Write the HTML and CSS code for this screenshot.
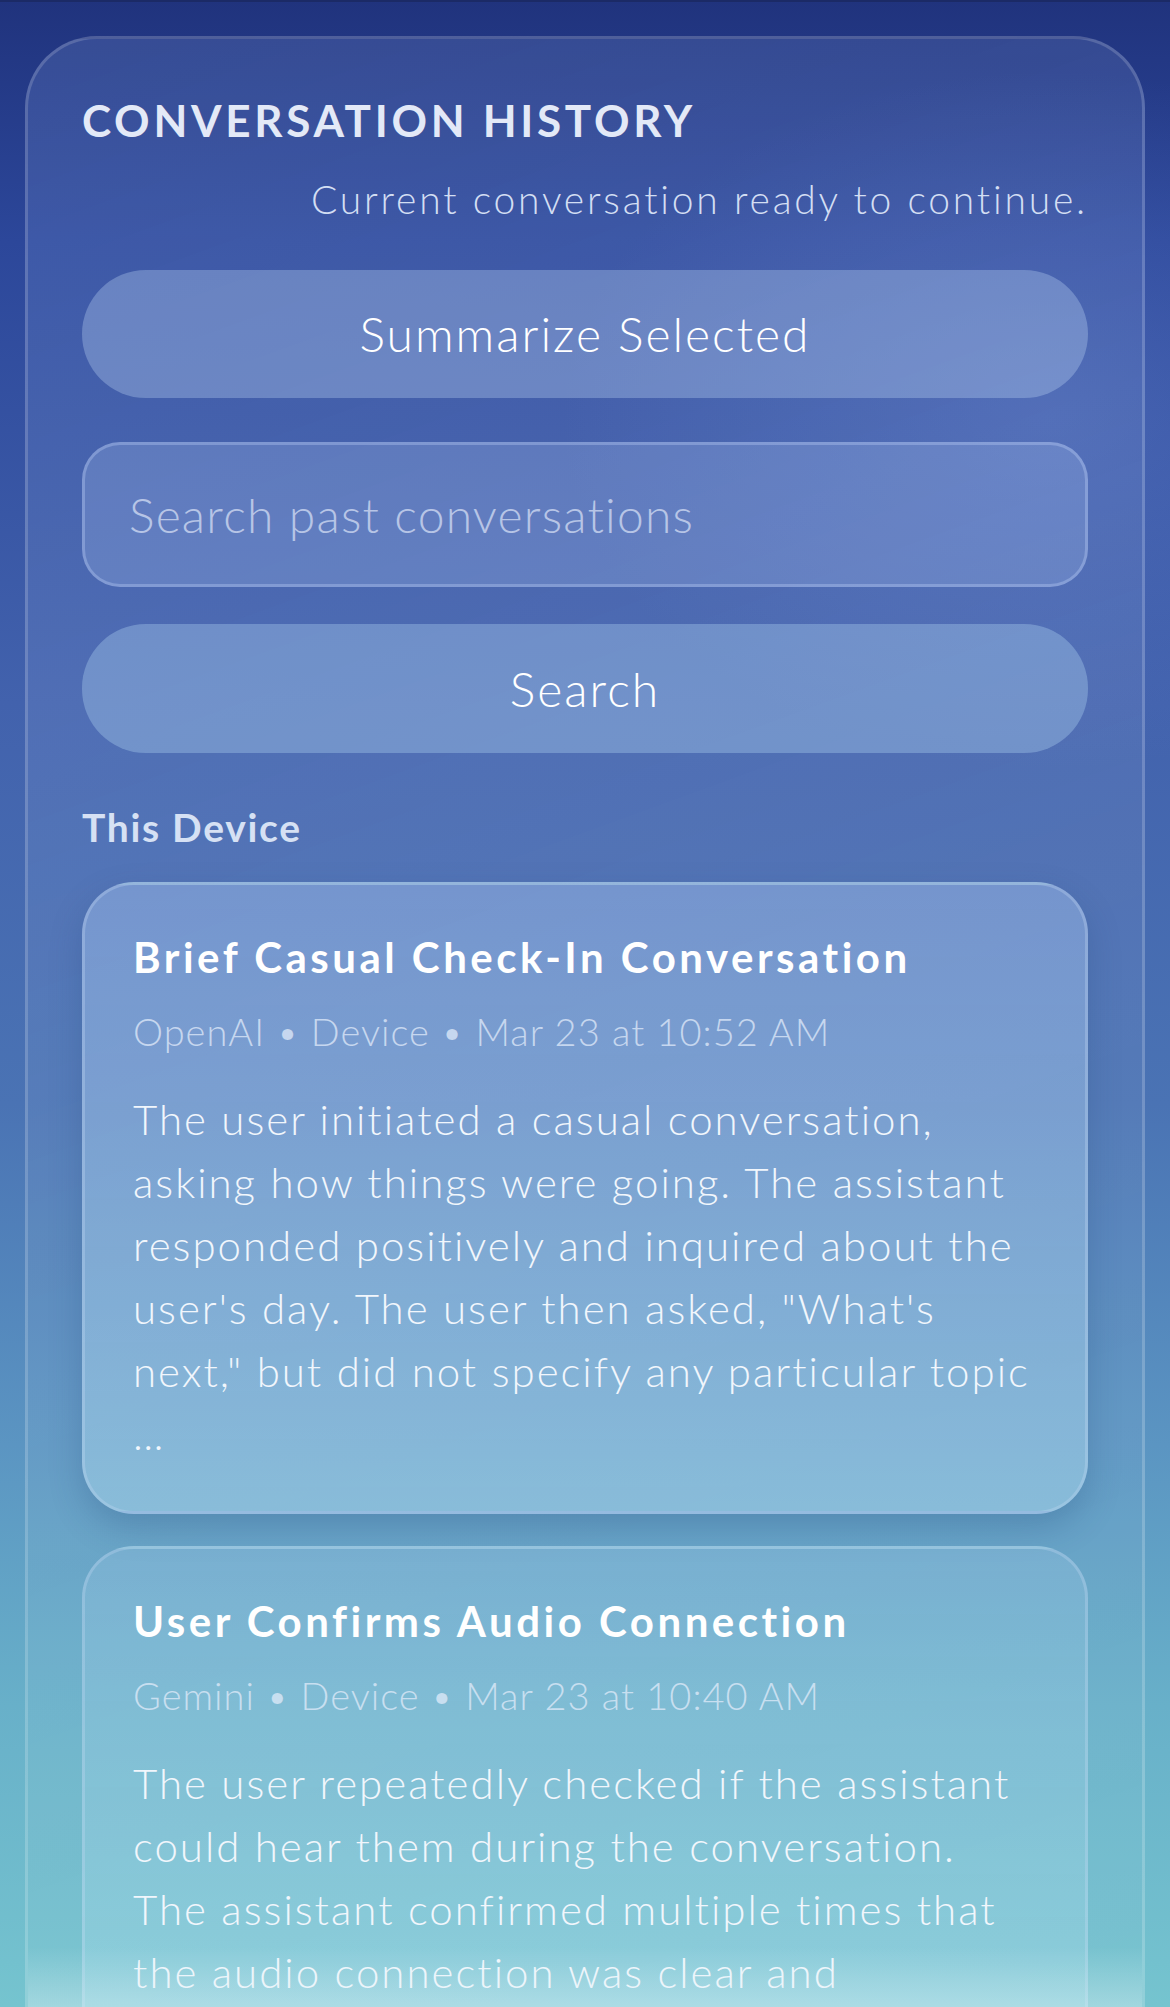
FILE: index.html
```html
<!DOCTYPE html>
<html lang="en">
<head>
  <meta charset="UTF-8" />
  <meta name="viewport" content="width=device-width, initial-scale=1.0"/>
  <title>Conversation History</title>
  <link rel="stylesheet" href="styles.css">
</head>
<body>
  <div class="page">
    <section class="panel">
      <h2 class="panel-title">CONVERSATION HISTORY</h2>
      <p class="status">Current conversation ready to continue.</p>

      <button type="button" class="pill-btn">Summarize Selected</button>
      <input type="text" class="search-input" placeholder="Search past conversations" />
      <button type="button" class="pill-btn search-btn">Search</button>

      <h3 class="group-label">This Device</h3>

      <div class="history-list">
        <div class="history-card">
          <h4 class="card-title">Brief Casual Check-In Conversation</h4>
          <div class="card-meta">OpenAI &bull; Device &bull; Mar 23 at 10:52 AM</div>
          <p class="card-summary">The user initiated a casual conversation, asking how things were going. The assistant responded positively and inquired about the user's day. The user then asked, "What's next," but did not specify any particular topic <span class="more">&hellip;</span></p>
        </div>

        <div class="history-card">
          <h4 class="card-title">User Confirms Audio Connection</h4>
          <div class="card-meta">Gemini &bull; Device &bull; Mar 23 at 10:40 AM</div>
          <p class="card-summary">The user repeatedly checked if the assistant could hear them during the conversation. The assistant confirmed multiple times that the audio connection was clear and uninterrupted throughout the call.</p>
        </div>
      </div>
    </section>
  </div>
</body>
</html>
```

FILE: styles.css
```css
* {
  margin: 0; padding: 0; box-sizing: border-box;
}
html, body {
  height: 100%;
}
body {
  font-family: Lato, "Open Sans", sans-serif;
  color: #fff;
  overflow: hidden;
  background:
    radial-gradient(ellipse 700px 500px at 1050px 420px, rgba(110,140,215,0.3), transparent 70%),
    linear-gradient(to bottom, #20337d 0%, #2c479a 12%, #4262ad 35%, #4a73b4 55%, #5b95c2 72%, #68b0c9 85%, #75c4cf 100%);
  border-top: 2px solid #1b2a66;
}
.page {
  height: 100%;
  padding: 34px 25px 0;
  display: flex;
}
.panel {
  position: relative;
  flex: 1;
  overflow: hidden;
  border: 3px solid rgba(255,255,255,0.17);
  border-bottom: none;
  border-radius: 72px 72px 0 0;
  background: linear-gradient(160deg, rgba(150,180,240,0.18), rgba(255,255,255,0.07) 50%, rgba(255,255,255,0.04));
  padding: 55px 54px 0;
}
.panel::after {
  content: "";
  position: absolute;
  left: 0; right: 0; bottom: 0;
  height: 60px;
  background: linear-gradient(to bottom, rgba(255,255,255,0), rgba(220,240,245,0.4));
  pointer-events: none;
}
.panel-title {
  font-size: 44px;
  line-height: 1.2;
  font-weight: 700;
  letter-spacing: 3.7px;
  color: #e3e9f7;
}
.status {
  margin-top: 29px;
  font-size: 39px;
  line-height: 1.2;
  font-weight: 300;
  letter-spacing: 2.8px;
  text-align: right;
  color: #d3def3;
}
.pill-btn {
  display: block;
  width: 100%;
  height: 128px;
  margin-top: 47px;
  border: none;
  border-radius: 64px;
  background: rgba(190,215,245,0.33);
  color: #fff;
  font-family: inherit;
  font-size: 48px;
  font-weight: 300;
  letter-spacing: 2px;
}
.search-input {
  display: block;
  width: 100%;
  height: 145px;
  margin-top: 44px;
  padding: 0 44px;
  border: 3px solid rgba(190,210,245,0.35);
  border-radius: 38px;
  background: rgba(170,195,240,0.25);
  color: #fff;
  font-family: inherit;
  font-size: 48px;
  font-weight: 300;
  letter-spacing: 1.2px;
  outline: none;
}
.search-input::placeholder {
  color: #b7c5e6;
}
.search-btn {
  height: 129px;
  margin-top: 37px;
  background: rgba(175,210,240,0.36);
}
.group-label {
  margin-top: 51px;
  font-size: 39px;
  line-height: 1.2;
  font-weight: 700;
  letter-spacing: 1.7px;
  color: #d6e1f4;
}
.history-list {
  margin-top: 32px;
  display: flex;
  flex-direction: column;
  gap: 32px;
}
.history-card {
  border: 3px solid rgba(200,220,245,0.3);
  border-radius: 52px;
  padding: 46px 50px 45px 48px;
  background: linear-gradient(to bottom, rgba(160,190,235,0.45), rgba(170,215,235,0.5));
  box-shadow: 0 14px 32px rgba(30,70,120,0.25);
}
.history-card + .history-card {
  background: linear-gradient(to bottom, rgba(150,195,225,0.35), rgba(170,225,235,0.4));
  box-shadow: none;
}
.card-title {
  font-size: 42px;
  line-height: 1.25;
  font-weight: 700;
  letter-spacing: 3.5px;
  color: #fff;
}
.card-meta {
  margin-top: 23px;
  font-size: 38px;
  line-height: 1.3;
  font-weight: 300;
  letter-spacing: 1px;
  color: rgba(225,235,250,0.75);
}
.card-summary {
  margin-top: 32px;
  font-size: 42px;
  line-height: 63px;
  font-weight: 300;
  letter-spacing: 2px;
  color: #f1f6fc;
}
.more {
  display: block;
  letter-spacing: 7px;
}
```
